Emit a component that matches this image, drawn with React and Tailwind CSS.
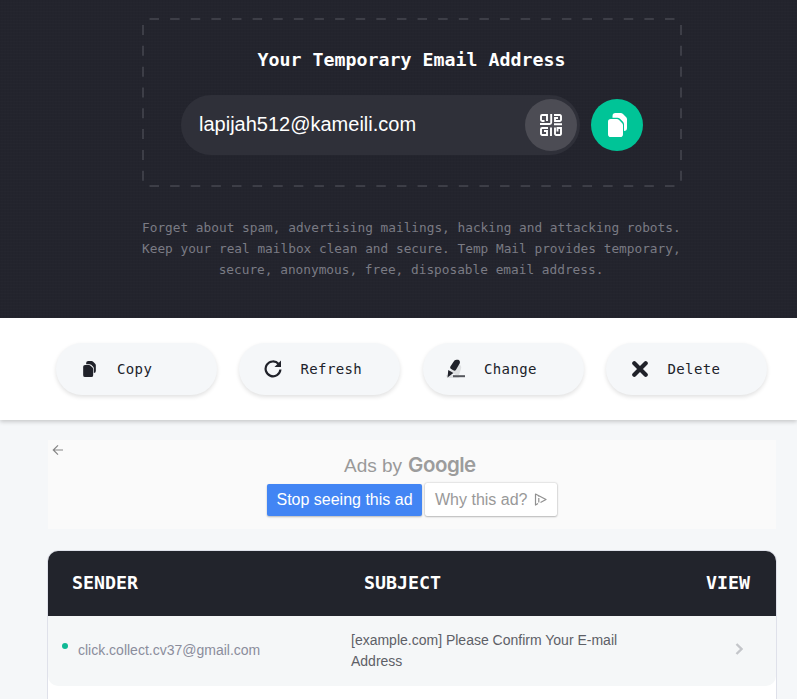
import React from "react";

const MONO = "font-['DejaVu_Sans_Mono',monospace]";
const SANS = "font-['Liberation_Sans',Arial,sans-serif]";

function CopyIcon({ className }) {
  return (
    <svg viewBox="0 0 19 24" className={className} fill="currentColor">
      <path d="M4.500 4.800V3a3 3 0 0 1 3-3h5.200Q14 0 15 1l3 3q1 1 1 2.300V15a3 3 0 0 1-3 3v-6.700q0-1.500-1-2.500L12 5.800q-1-1-2.500-1z" />
      <path d="M2.800 6h6q1.300 0 2.300 1l2.900 2.900q1 1 1 2.300v9a2.800 2.800 0 0 1-2.800 2.800H2.800A2.800 2.800 0 0 1 0 21.200V8.800A2.800 2.800 0 0 1 2.800 6z" />
    </svg>
  );
}

function QrIcon() {
  return (
    <svg viewBox="0 0 22 22" className="h-[22px] w-[22px]" fill="none" stroke="#fff" strokeWidth="1.900">
      <path d="M4.500 7H2.200A1.200 1.200 0 0 1 1 5.800V2.200A1.200 1.200 0 0 1 2.200 1H7v6" />
      <path d="M11.200 0v8.500a1.500 1.500 0 0 1-1.500 1.500H0M14 1h5.800A1.200 1.200 0 0 1 21 2.200v3.600A1.200 1.200 0 0 1 19.800 7H15V4h3M14 10.200h8" />
      <path d="M8 14H2.200A1.200 1.200 0 0 0 1 15.200v4.600A1.200 1.200 0 0 0 2.200 21H7v-4H4M11 13.500V22M15 13.500v6.300a1.200 1.200 0 0 0 1.200 1.200h3.600a1.200 1.200 0 0 0 1.200-1.200V14h-3.500v3.500" />
    </svg>
  );
}

function RefreshIcon() {
  return (
    <svg viewBox="0 0 18 18" className="h-[18px] w-[18px]" fill="none">
      <path d="M14.600 4A7.400 7.400 0 1 0 16.400 9.500" stroke="#20222a" strokeWidth="2.200" />
      <path d="M17 .5V7h-6.500z" fill="#20222a" />
    </svg>
  );
}

function PenIcon() {
  return (
    <svg viewBox="0 0 20 20" className="h-5 w-5 overflow-visible">
      <path d="M4 12 13 5q3 2 2 5l-2 6H0l1 3h13" fill="#000" opacity=".09" />
      <path d="M7.200 3.200Q8.500.8 10.500.8h1.700q2.300 1 1.600 3.500L10 10.800q-1 1.400-2.700.5L4.700 9.800q-1-.8-.3-2.200z" fill="#20222a" />
      <path d="M2.300 11 7.400 13.900 1.500 18.500z" fill="#20222a" />
      <path d="M7 17.200h12" stroke="#55575d" strokeWidth="2" />
    </svg>
  );
}

function CrossIcon() {
  return (
    <svg viewBox="0 0 16 16" className="h-4 w-4">
      <path d="M2.300 2.300 13.700 13.700M13.700 2.300 2.300 13.700" stroke="#20222a" strokeWidth="4.200" strokeLinecap="round" />
    </svg>
  );
}

const actions = [
  { label: "Copy", icon: <CopyIcon className="h-4 w-[13px] text-[#20222a]" /> },
  { label: "Refresh", icon: <RefreshIcon /> },
  { label: "Change", icon: <PenIcon /> },
  { label: "Delete", icon: <CrossIcon /> },
];

function Hero() {
  return (
    <header className="h-[318px] bg-[#23242d] bg-[repeating-linear-gradient(0deg,#ffffff02_0_1px,transparent_1px_3px),repeating-linear-gradient(90deg,#00000008_0_1px,transparent_1px_3px)] pl-[142px] pt-[18px]">
      <section className="relative h-[169px] w-[540px] pl-[39px] pt-[29px]">
        <svg className="absolute inset-0 h-full w-full" fill="none" stroke="#3d3e47" strokeWidth="2">
          <path d="M7.500 1H534M7.500 168H534" strokeDasharray="9.500 11.120" />
          <path d="M1 7V163M539 7V163" strokeDasharray="10 10.820" />
        </svg>
        <h1 className={`${MONO} w-[461px] text-center text-[18.270px] font-bold leading-[26px] text-white`}>
          Your Temporary Email Address
        </h1>
        <div className="mt-[22px] flex items-center gap-[11px]">
          <div className="flex h-[60px] w-[399px] items-center justify-between rounded-full bg-[#2f3039] pl-[18px] pr-[3px]">
            <span className={`${SANS} pb-[2px] text-[20px] leading-none text-white`}>lapijah512@kameili.com</span>
            <button className="flex h-[52px] w-[52px] items-center justify-center rounded-full bg-[#4c4c54]">
              <QrIcon />
            </button>
          </div>
          <button className="flex h-[52px] w-[52px] items-center justify-center rounded-full bg-[#00c497]">
            <CopyIcon className="h-6 w-[19px] text-white" />
          </button>
        </div>
      </section>
      <p className={`${MONO} mt-[30px] w-[538px] whitespace-nowrap text-center text-[12.790px] leading-[21px] text-[#7a7b84]`}>
        Forget about spam, advertising mailings, hacking and attacking robots.
        <br />
        Keep your real mailbox clean and secure. Temp Mail provides temporary,
        <br />
        secure, anonymous, free, disposable email address.
      </p>
    </header>
  );
}

function Ad() {
  return (
    <aside className={`${SANS} ml-12 mt-5 flex h-[89px] w-[728px] items-start bg-[#fafafa]`}>
      <svg viewBox="0 0 12 12" className="ml-1 mt-1 h-3 w-3" fill="none" stroke="#858585" strokeWidth="1.200">
        <path d="M11 6H1.500M6 1.300 1.300 6 6 10.700" />
      </svg>
      <div className="ml-[203px] flex flex-col">
        <div className="ml-[77px] flex h-[42px] items-center pt-[9px] text-[19px] leading-6 text-[#999]">
          <span>Ads by</span>
          <span className="ml-[6px] pb-px font-['Inter',sans-serif] text-[20.500px] font-semibold tracking-[-0.500px] text-[#9c9c9c]">Google</span>
        </div>
        <div className="flex gap-[3px]">
          <button className="mt-[2px] h-8 w-[155px] whitespace-nowrap rounded-[2px] bg-[#4285f4] text-[16px] text-white shadow-[0_1px_2px_#0004]">
            Stop seeing this ad
          </button>
          <button className="mt-px flex h-[33px] w-[132px] items-center gap-[7px] whitespace-nowrap rounded-[2px] bg-white pl-[10px] text-[16px] text-[#999] shadow-[0_0_2px_#0004,0_1px_2px_#0003]">
            Why this ad?
            <svg viewBox="0 0 13 13" className="h-[13px] w-[13px]" fill="none" stroke="#909090" strokeWidth="1.200" strokeLinejoin="round">
              <path d="M4 10.500 1.500 12V1L12 6.500 6.500 9.500M4.800 5v4.500M4.800 3v.8" />
            </svg>
          </button>
        </div>
      </div>
    </aside>
  );
}

function Inbox() {
  return (
    <section className="ml-[47px] mt-[21px] h-[170px] w-[730px] overflow-hidden rounded-t-[11px] border border-[#dfe1ea] bg-white">
      <div className={`${MONO} flex h-[65px] items-center bg-[#22242c] pb-[2px] text-[18.270px] font-bold text-white`}>
        <span className="ml-6 w-[292px]">SENDER</span>
        <span className="grow">SUBJECT</span>
        <span className="mr-[26px]">VIEW</span>
      </div>
      <div className={`${SANS} flex h-[70px] rounded-b-[10px] bg-[#f5f7f8] text-[14px] leading-[21px]`}>
        <i className="ml-[14px] mt-[27px] h-[6px] w-[6px] rounded-full bg-[#10b995]" />
        <span className="ml-[10px] mt-[24px] w-[273px] text-[#8b8d9c]">click.collect.cv37@gmail.com</span>
        <span className="mt-[14px] w-[290px] text-[#5d6067]">[example.com] Please Confirm Your E-mail Address</span>
        <svg viewBox="0 0 8 12" className="ml-[94px] mt-[27px] h-3 w-2" fill="none" stroke="#c4c6ca" strokeWidth="2.300">
          <path d="m1.500 1 5 5-5 5" />
        </svg>
      </div>
    </section>
  );
}

export default function App() {
  return (
    <div className="h-[699px] w-[797px] overflow-hidden bg-[#f5f7f9]">
      <Hero />
      <nav className="flex h-[102px] gap-[22.500px] bg-white pl-[55.500px] pt-[25px] shadow-[0_2px_4px_#0000002e]">
        {actions.map(({ label, icon }) => (
          <button key={label} className="flex h-[52px] w-[161px] shrink-0 items-center rounded-full bg-[#f5f7f9] pl-[23.500px] shadow-[0_2px_4px_#0000001f]">
            <span className="flex w-5 justify-center">{icon}</span>
            <span className={`${MONO} ml-[18px] text-[14px] tracking-[0.370px] text-[#20222a]`}>{label}</span>
          </button>
        ))}
      </nav>
      <Ad />
      <Inbox />
    </div>
  );
}
